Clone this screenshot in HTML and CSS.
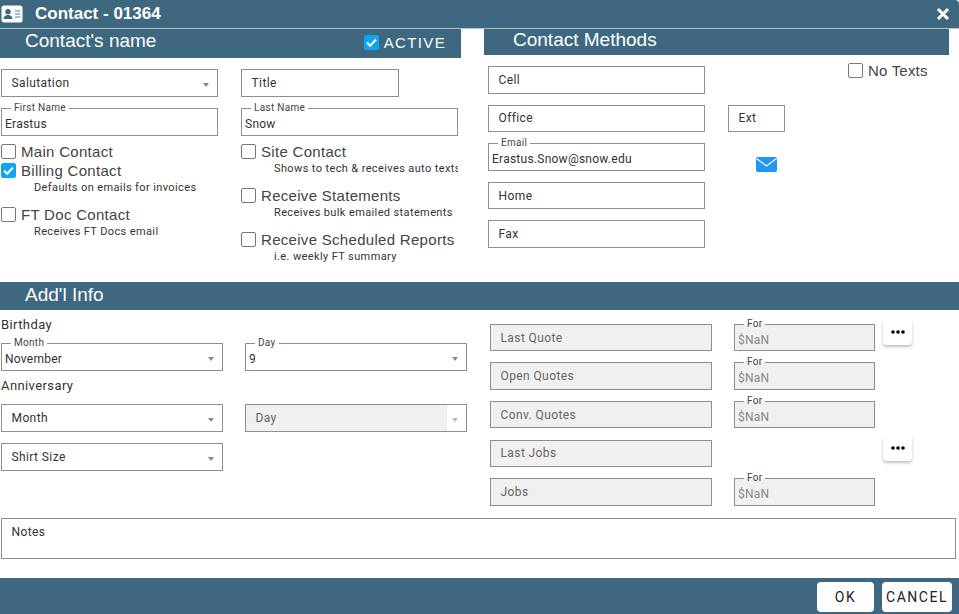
FILE: index.html
```html
<!DOCTYPE html>
<html lang="en">
<head>
  <meta charset="UTF-8" />
  <meta name="viewport" content="width=device-width, initial-scale=1" />
  <title>Contact - 01364</title>
  <link rel="stylesheet" href="styles.css">
</head>
<body>
  <header class="titlebar">
    <svg class="title-icon" width="22" height="18" viewBox="0 0 22 18">
      <rect x="0.5" y="0.5" width="21" height="17" rx="2.5" fill="#fff"/>
      <circle cx="7" cy="6.8" r="2.7" fill="#3d6880"/>
      <path d="M2.5 14c0-2.8 2-4 4.5-4s4.500 1.200 4.500 4z" fill="#3d6880"/>
      <path d="M14 6h5.500M14 9h5.500M14 12h5.500" stroke="#8fa9b8" stroke-width="1.300"/>
    </svg>
    <span class="title-text">Contact - 01364</span>
    <svg class="close-icon" width="14" height="14" viewBox="0 0 14 14">
      <path d="M2 2l10 10M12 2L2 12" stroke="#fff" stroke-width="3"/>
    </svg>
  </header>

  <div class="top">
    <section class="name-col">
      <div class="band band-name">
        <h2>Contact's name</h2>
        <label class="active-check">
          <span class="box checked"><svg width="13" height="13" viewBox="0 0 13 13"><path d="M2 6.500l3.200 3.200L11 3.500" fill="none" stroke="#fff" stroke-width="2"/></svg></span>
          ACTIVE
        </label>
      </div>
      <div class="name-grid">
        <div class="field select">Salutation</div>
        <div class="field title-field">Title</div>
        <fieldset class="notched"><legend>First Name</legend>Erastus</fieldset>
        <fieldset class="notched"><legend>Last Name</legend>Snow</fieldset>
        <div class="checks">
          <div class="check-item tight">
            <label class="check"><span class="box"></span>Main Contact</label>
          </div>
          <div class="check-item">
            <label class="check"><span class="box checked"><svg width="13" height="13" viewBox="0 0 13 13"><path d="M2 6.500l3.200 3.200L11 3.500" fill="none" stroke="#fff" stroke-width="2"/></svg></span>Billing Contact</label>
            <div class="hint">Defaults on emails for invoices</div>
          </div>
          <div class="check-item">
            <label class="check"><span class="box"></span>FT Doc Contact</label>
            <div class="hint">Receives FT Docs email</div>
          </div>
        </div>
        <div class="checks">
          <div class="check-item">
            <label class="check"><span class="box"></span>Site Contact</label>
            <div class="hint">Shows to tech &amp; receives auto texts</div>
          </div>
          <div class="check-item">
            <label class="check"><span class="box"></span>Receive Statements</label>
            <div class="hint">Receives bulk emailed statements</div>
          </div>
          <div class="check-item">
            <label class="check"><span class="box"></span>Receive Scheduled Reports</label>
            <div class="hint">i.e. weekly FT summary</div>
          </div>
        </div>
      </div>
    </section>

    <section class="methods-col">
      <div class="band band-methods"><h2>Contact Methods</h2></div>
      <div class="methods-grid">
        <div class="field">Cell</div>
        <div></div>
        <label class="check no-texts"><span class="box"></span>No Texts</label>
        <div class="field">Office</div>
        <div class="field">Ext</div>
        <div></div>
        <fieldset class="notched"><legend>Email</legend>Erastus.Snow@snow.edu</fieldset>
        <svg class="mail-icon" width="21" height="15" viewBox="0 0 21 15">
          <rect width="21" height="15" rx="2" fill="#2196f3"/>
          <path d="M0.500 1.500l10 7.500 10-7.500" fill="none" stroke="#fff" stroke-width="1.200"/>
        </svg>
        <div></div>
        <div class="field">Home</div>
        <div></div>
        <div></div>
        <div class="field">Fax</div>
      </div>
    </section>
  </div>

  <div class="band band-info"><h2>Add'l Info</h2></div>
  <div class="info">
    <div class="info-left">
      <div class="group-label">Birthday</div>
      <div class="pair">
        <fieldset class="notched select"><legend>Month</legend>November</fieldset>
        <fieldset class="notched select"><legend>Day</legend>9</fieldset>
      </div>
      <div class="group-label second">Anniversary</div>
      <div class="pair">
        <div class="field select">Month</div>
        <div class="field select off">Day</div>
        <div class="field select">Shirt Size</div>
      </div>
    </div>
    <div class="info-right">
      <div class="field off">Last Quote</div>
      <fieldset class="notched off"><legend>For</legend>$NaN</fieldset>
      <button class="more" type="button"><svg width="14" height="4" viewBox="0 0 14 4"><circle cx="2" cy="2" r="1.800"/><circle cx="7" cy="2" r="1.800"/><circle cx="12" cy="2" r="1.800"/></svg></button>
      <div class="field off">Open Quotes</div>
      <fieldset class="notched off"><legend>For</legend>$NaN</fieldset>
      <div></div>
      <div class="field off">Conv. Quotes</div>
      <fieldset class="notched off"><legend>For</legend>$NaN</fieldset>
      <div></div>
      <div class="field off">Last Jobs</div>
      <div></div>
      <button class="more" type="button"><svg width="14" height="4" viewBox="0 0 14 4"><circle cx="2" cy="2" r="1.800"/><circle cx="7" cy="2" r="1.800"/><circle cx="12" cy="2" r="1.800"/></svg></button>
      <div class="field off">Jobs</div>
      <fieldset class="notched off"><legend>For</legend>$NaN</fieldset>
    </div>
  </div>

  <div class="notes">Notes</div>

  <footer class="footer">
    <button class="action ok" type="button">OK</button>
    <button class="action" type="button">CANCEL</button>
  </footer>
</body>
</html>
```

FILE: styles.css
```css
* { box-sizing: border-box; }
body { margin: 0; width: 959px; height: 614px; overflow: hidden; background: #fff; color: #333; font-family: Roboto, Arial, sans-serif; font-size: 12px; letter-spacing: 0.4px; }

.titlebar { display: flex; align-items: center; height: 29px; padding: 0 9px 1px 1px; background: #3d6880; border-bottom: 1px solid #b5c0c6; border-radius: 0 4px 0 0; color: #fff; }
.title-icon { margin-right: 12px; }
.title-text { flex: 1; font-family: "Liberation Sans", Arial, sans-serif; font-size: 17px; font-weight: 700; letter-spacing: 0; }

.band { display: flex; align-items: center; background: #3d6880; color: #fff; }
.band h2 { margin: 0; font-family: "Liberation Sans", Arial, sans-serif; font-size: 19px; font-weight: 400; letter-spacing: 0; }
.band-name { width: 461px; height: 29px; padding: 0 15px 5px 25px; justify-content: space-between; }
.band-methods { width: 465px; height: 26px; padding: 0 0 5px 29px; }
.band-info { height: 28px; padding: 0 0 3px 25px; }

.top { display: flex; height: 253px; }
.name-col { width: 484px; }
.methods-col { width: 465px; }

.active-check { display: flex; align-items: center; gap: 5px; margin-top: 3px; font-family: "Liberation Sans", Arial, sans-serif; font-size: 15px; letter-spacing: 1.350px; }

.name-grid { display: grid; grid-template-columns: 217px 217px; column-gap: 23px; row-gap: 11px; padding: 11px 0 0 1px; }
.methods-grid { display: grid; grid-template-columns: 217px 57px 1fr; column-gap: 23px; row-gap: 11px; grid-auto-rows: 27.600px; padding: 11px 0 0 4px; }

.field { display: flex; align-items: center; height: 28px; padding: 0 9.500px; border: 1px solid #8f8f8f; background: #fff; }
.methods-grid .field, .methods-grid .notched, .info-right .field, .info-right .notched { height: 100%; }
.title-field { width: 158px; }

fieldset.notched { display: block; height: 28px; min-width: 0; margin: 0; padding: 7px 3px 0; border: 1px solid #8f8f8f; background: #fff; line-height: 16px; letter-spacing: 0.250px; }
.notched legend { height: 1px; margin-left: 6px; padding: 0 3px; font-size: 10px; line-height: 0; letter-spacing: 0.300px; color: #444; }

.select { position: relative; }
.select::after { content: ""; position: absolute; right: 8px; top: 50%; border-left: 3.500px solid transparent; border-right: 3.500px solid transparent; border-top: 4px solid #888; }

.off { background: #f0f0f0; color: #666; }
fieldset.notched.off { background: #f0f0f0; color: #888; }
.field.select.off { background: linear-gradient(to right, #f0f0f0 201px, #fff 201px); }
.field.select.off::after { border-top-color: #bbb; }

.checks { margin-top: -6px; }
.check-item { width: 217px; margin-bottom: 10px; overflow: hidden; white-space: nowrap; }
.check-item.tight { margin-bottom: -1px; }
.check { display: flex; align-items: center; gap: 5px; height: 20px; font-family: "Liberation Sans", Arial, sans-serif; font-size: 15px; letter-spacing: 0.300px; color: #444; }
.box { display: flex; align-items: center; justify-content: center; flex: none; width: 15px; height: 15px; border: 1px solid #777; border-radius: 2px; background: #fff; }
.box.checked { border-color: #0fa5f5; background: #0fa5f5; }
.hint { height: 12px; margin-top: 2px; padding-left: 33px; font-size: 11px; line-height: 12px; letter-spacing: 0.380px; }

.no-texts { justify-self: start; margin: -6px 0 0 40px; white-space: nowrap; letter-spacing: 0.200px; }
.mail-icon { margin: 14px 0 0 28px; }

.info { display: flex; height: 208px; }
.info-left { width: 489px; padding: 8px 0 0 1px; }
.group-label { height: 16px; margin-bottom: 9px; font-size: 13px; line-height: 14px; }
.group-label.second { margin: 8px 0 9px; }
.pair { display: grid; grid-template-columns: 222px 222px; column-gap: 22px; row-gap: 11px; }

.info-right { display: grid; grid-template-columns: 222px 141px 29px; column-gap: 22px; row-gap: 11.050px; grid-auto-rows: 27.500px; padding: 13.900px 0 0 1px; align-content: start; }
.more { display: flex; align-items: center; justify-content: center; width: 29px; height: 26px; margin: -5px 0 0 -14px; padding: 0; border: 0; border-radius: 4px; background: #fff; box-shadow: 0 2px 3px rgba(0,0,0,0.25); }

.notes { width: 955px; height: 41px; margin: 0 0 19px 1px; padding: 6px 9.500px; border: 1px solid #8f8f8f; }

.footer { display: flex; justify-content: flex-end; gap: 8px; height: 36px; padding: 4px 7px 2px 0; background: #3d6880; }
.action { width: 70px; height: 30px; padding: 0; border: 0; border-radius: 4px; background: #fff; color: #222; font-family: Roboto, Arial, sans-serif; font-size: 14px; letter-spacing: 1.500px; }
.action.ok { width: 57px; }
```
